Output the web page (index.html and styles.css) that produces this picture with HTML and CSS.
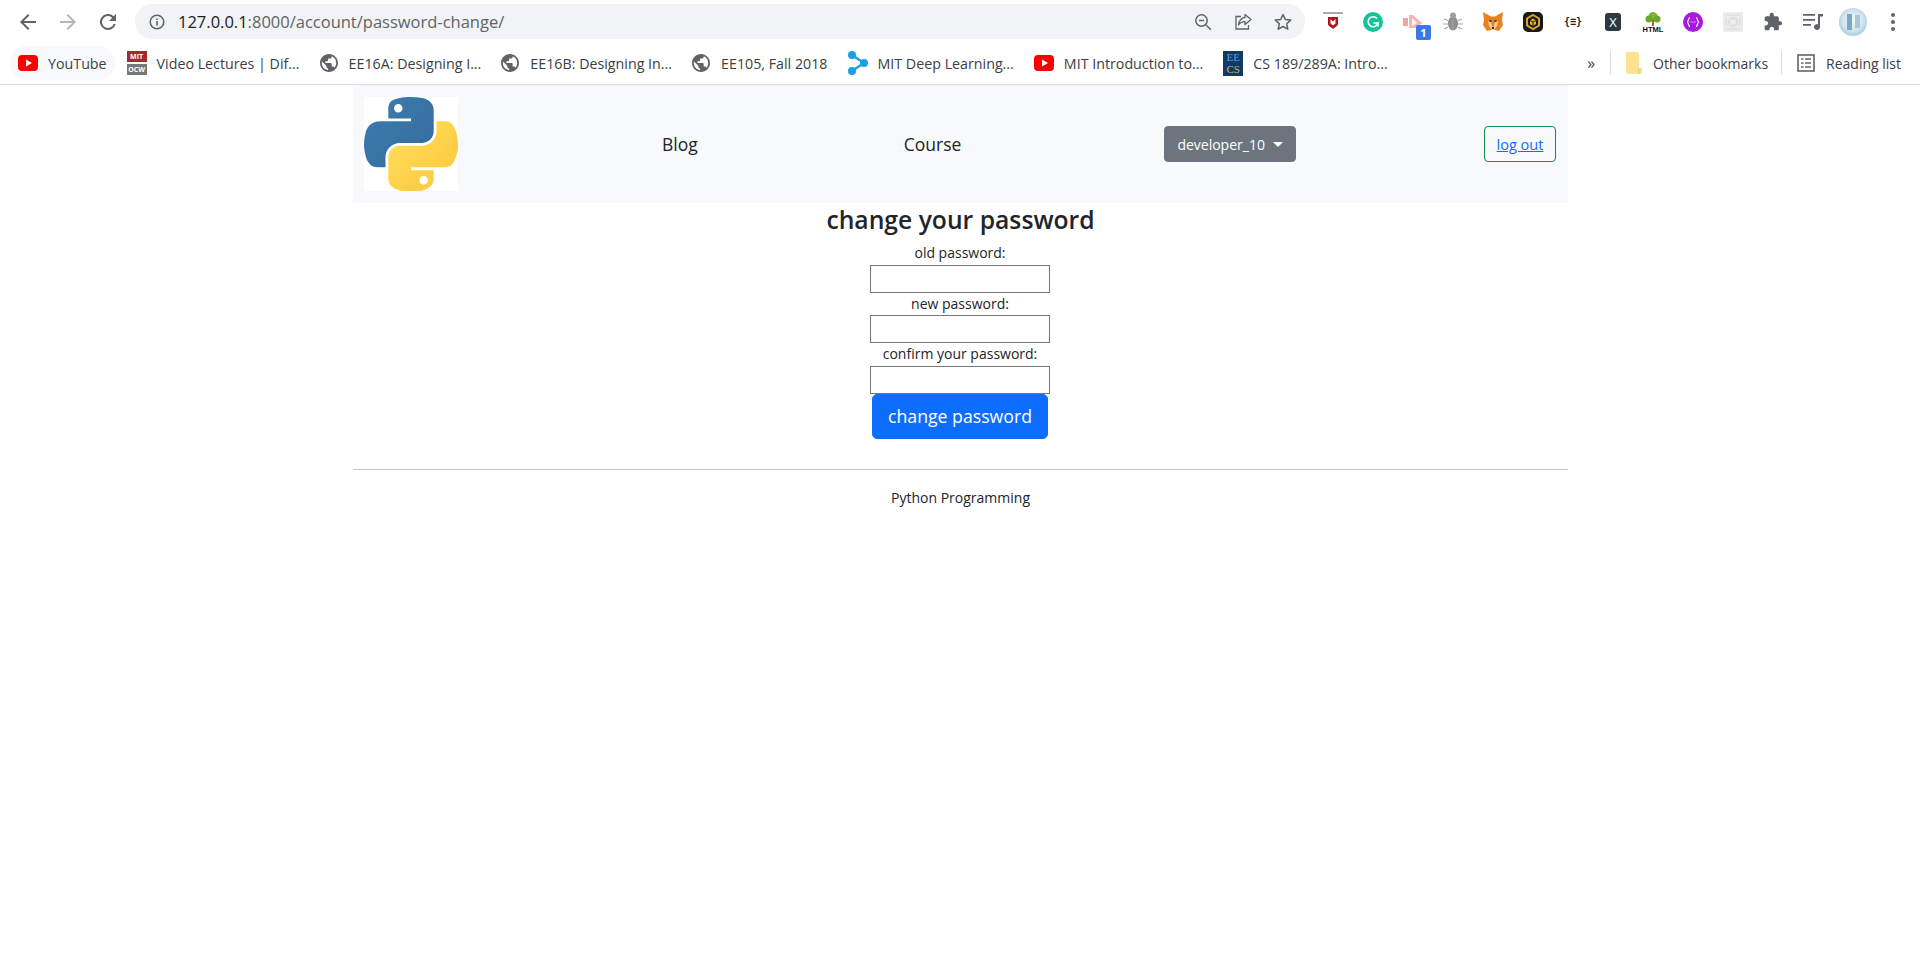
FILE: index.html
```html
<!DOCTYPE html>
<html lang="en">
<head>
  <meta charset="UTF-8" />
  <title>change your password</title>
  <link rel="stylesheet" href="styles.css">
</head>
<body>
  <header class="chrome">
    <div class="toolbar">
      <svg class="nav-icon" viewBox="0 0 24 24"><path d="M20 11H7.8l5.6-5.6L12 4l-8 8 8 8 1.4-1.4L7.8 13H20z" fill="#5f6368"/></svg>
      <svg class="nav-icon" viewBox="0 0 24 24"><path d="M4 11h12.2l-5.6-5.6L12 4l8 8-8 8-1.4-1.4 5.6-5.6H4z" fill="#b4b6b9"/></svg>
      <svg class="nav-icon" viewBox="0 0 24 24"><path d="M17.65 6.35A8 8 0 1 0 19.73 14h-2.08a6 6 0 1 1-1.41-6.24L13 11h7V4z" fill="#5f6368"/></svg>
      <div class="omnibox">
        <svg class="info" viewBox="0 0 16 16"><circle cx="8" cy="8" r="6.8" fill="none" stroke="#5f6368" stroke-width="1.5"/><path d="M7.2 7h1.6v4.6H7.2zM7.2 4.4h1.6V6H7.2z" fill="#5f6368"/></svg>
        <span class="url"><b>127.0.0.1</b>:8000/account/password-change/</span>
        <svg class="omni-icon" viewBox="0 0 20 20"><circle cx="8.5" cy="8.5" r="5.7" fill="none" stroke="#5f6368" stroke-width="1.5"/><path d="M12.8 12.8l5 5M6 8.5h5" stroke="#5f6368" stroke-width="1.5" fill="none"/></svg>
        <svg class="omni-icon" viewBox="0 0 20 20"><path d="M8 4.5H3V17h12.5v-4" fill="none" stroke="#5f6368" stroke-width="1.3"/><path d="M12 2.5l6 5-6 5V9.7c-3 0-5 1-6.5 3.3C6 9 8 6 12 5.4z" fill="none" stroke="#5f6368" stroke-width="1.3" stroke-linejoin="round"/></svg>
        <svg class="omni-icon" viewBox="0 0 20 20"><path d="M10 2.5l2.300 5 5.400.6-4 3.700 1.100 5.400-4.800-2.700-4.800 2.700 1.100-5.400-4-3.700 5.400-.6z" fill="none" stroke="#5f6368" stroke-width="1.5" stroke-linejoin="round"/></svg>
      </div>
      <div class="extensions">
        <svg class="ext" viewBox="0 0 20 20"><rect width="20" height="2" fill="#a9a9a9"/><path d="M5 5h10v7c0 2-3 3-5 5-2-2-5-3-5-5z" fill="#b5121b"/><path d="M7.5 7v4.500l2.500 2 2.500-2V7L10 9.500z" fill="#fff"/></svg>
        <svg class="ext" viewBox="0 0 20 20"><circle cx="10" cy="10" r="10" fill="#15c39a"/><path d="M14 6.500a5 5 0 1 0 1 4.500h-4.500" fill="none" stroke="#fff" stroke-width="1.6"/><path d="M15 11v3.500" stroke="#fff" stroke-width="1.6"/></svg>
        <div class="ext ext-badge">
          <svg viewBox="0 0 20 20"><path d="M0 6h5v8H0z" fill="#f7a1a1"/><path d="M6 3h4l9 8-5 5H6z" fill="#f9b3b3"/><path d="M9 6l5 5-5 3z" fill="#fff"/></svg>
          <span class="badge">1</span>
        </div>
        <svg class="ext" viewBox="0 0 20 20"><ellipse cx="10" cy="11.5" rx="5" ry="7" fill="#8e8e8e"/><circle cx="10" cy="3.5" r="3" fill="#9d9d9d"/><path d="M10 7v11M1 7l4 1.500M19 7l-4 1.500M0 12h5M20 12h-5M1 17l4-2M19 17l-4-2" stroke="#a5a5a5" stroke-width="1.2"/></svg>
        <svg class="ext" viewBox="0 0 20 20"><path d="M0 0l8 4.500h4L20 0l-1 8 1 5-4 6-4-1H8l-4 1-4-6 1-5z" fill="#e8821e"/><path d="M5 9l3 1 2 7 2-7 3-1-1 5-3 4H9l-3-4z" fill="#f6c9a0"/><path d="M9 15h2v2H9z" fill="#333"/><path d="M6.500 8h2v2h-2zM11.500 8h2v2h-2z" fill="#5c3a1e"/></svg>
        <div class="ext ext-dark"><svg viewBox="0 0 20 20"><path d="M10 3l6 3.500v7L10 17l-6-3.500v-7z" fill="none" stroke="#d9a520" stroke-width="2"/><path d="M10 6.500l3 2V12l-3 2-3-2V8.500z" fill="#e8b923"/><path d="M10 10v4M7 8.500l3 1.500 3-1.500" stroke="#17181a" stroke-width="1" fill="none"/></svg></div>
        <span class="ext ext-braces">{≡}</span>
        <span class="ext ext-x">X</span>
        <div class="ext ext-tree"><svg viewBox="0 0 20 14"><circle cx="10" cy="4.5" r="4.5" fill="#7ab833"/><circle cx="6" cy="7" r="3.5" fill="#6aa82b"/><circle cx="14" cy="7" r="3.5" fill="#6aa82b"/><rect x="9" y="8" width="2" height="6" fill="#a9662c"/></svg><span>HTML</span></div>
        <svg class="ext" viewBox="0 0 20 20"><circle cx="10" cy="10" r="10" fill="#a818e0"/><path d="M7 5.500c-2 0-1 4.500-3 4.500 2 0 1 4.500 3 4.500M13 5.500c2 0 1 4.500 3 4.500-2 0-1 4.500-3 4.500" fill="none" stroke="#fff" stroke-width="1.2"/><path d="M7.500 10h1M9.500 10h1M11.500 10h1" stroke="#fff" stroke-width="1.2"/></svg>
        <svg class="ext" viewBox="0 0 20 20"><rect width="20" height="20" rx="1" fill="#ececec"/><circle cx="10" cy="10" r="4" fill="none" stroke="#dedede" stroke-width="2"/><path d="M3 3h14M3 17h14M3 6v8M17 6v8" stroke="#dedede" stroke-width="1.5"/></svg>
        <svg class="ext" viewBox="0 0 24 24"><path d="M20.5 11H19V7c0-1.100-.9-2-2-2h-4V3.500C13 2.120 11.880 1 10.500 1S8 2.120 8 3.500V5H4c-1.100 0-1.990.9-1.990 2v3.800H3.500c1.490 0 2.700 1.210 2.700 2.700s-1.210 2.700-2.700 2.700H2V20c0 1.100.9 2 2 2h3.800v-1.500c0-1.490 1.210-2.700 2.700-2.700 1.490 0 2.700 1.210 2.700 2.700V22H17c1.100 0 2-.9 2-2v-4h1.500c1.380 0 2.500-1.120 2.500-2.500S21.880 11 20.500 11z" fill="#5f6368"/></svg>
        <svg class="ext" viewBox="0 0 20 20"><path d="M0 2h12v1.700H0zM0 7h12v1.700H0zM0 12h8v1.700H0z" fill="#5f6368"/><path d="M15 2h5v2.500h-3V15a3 3 0 1 1-2-2.800z" fill="#5f6368"/></svg>
        <div class="avatar"><span></span><span></span></div>
        <svg class="ext dots" viewBox="0 0 6 20"><circle cx="3" cy="3" r="2" fill="#5f6368"/><circle cx="3" cy="10" r="2" fill="#5f6368"/><circle cx="3" cy="17" r="2" fill="#5f6368"/></svg>
      </div>
    </div>
    <div class="bookmarks">
      <a class="mark mark-hover"><svg class="fav" viewBox="0 0 20 16"><rect width="20" height="16" rx="4" fill="#f00"/><path d="M8 4.500v7l6-3.500z" fill="#fff"/></svg>YouTube</a>
      <a class="mark"><span class="fav ocw"><i>MIT</i><i>OCW</i></span>Video Lectures | Dif...</a>
      <a class="mark"><svg class="fav globe" viewBox="2 2 20 20"><path d="M12 2C6.480 2 2 6.480 2 12s4.480 10 10 10 10-4.480 10-10S17.520 2 12 2zm-1 17.930c-3.950-.49-7-3.850-7-7.930 0-.62.08-1.210.21-1.790L9 15v1c0 1.100.9 2 2 2v1.930zm6.900-2.540c-.26-.81-1-1.390-1.900-1.390h-1v-3c0-.55-.45-1-1-1H8v-2h2c.55 0 1-.45 1-1V7h2c1.100 0 2-.9 2-2v-.41c2.930 1.190 5 4.060 5 7.410 0 2.080-.8 3.970-2.100 5.390z" fill="#5f6368"/></svg>EE16A: Designing I...</a>
      <a class="mark"><svg class="fav globe" viewBox="2 2 20 20"><path d="M12 2C6.480 2 2 6.480 2 12s4.480 10 10 10 10-4.480 10-10S17.520 2 12 2zm-1 17.930c-3.950-.49-7-3.850-7-7.930 0-.62.08-1.210.21-1.790L9 15v1c0 1.100.9 2 2 2v1.930zm6.900-2.540c-.26-.81-1-1.390-1.900-1.390h-1v-3c0-.55-.45-1-1-1H8v-2h2c.55 0 1-.45 1-1V7h2c1.100 0 2-.9 2-2v-.41c2.930 1.190 5 4.060 5 7.410 0 2.080-.8 3.970-2.100 5.390z" fill="#5f6368"/></svg>EE16B: Designing In...</a>
      <a class="mark"><svg class="fav globe" viewBox="2 2 20 20"><path d="M12 2C6.480 2 2 6.480 2 12s4.480 10 10 10 10-4.480 10-10S17.520 2 12 2zm-1 17.930c-3.950-.49-7-3.850-7-7.930 0-.62.08-1.210.21-1.790L9 15v1c0 1.100.9 2 2 2v1.930zm6.900-2.540c-.26-.81-1-1.390-1.900-1.390h-1v-3c0-.55-.45-1-1-1H8v-2h2c.55 0 1-.45 1-1V7h2c1.100 0 2-.9 2-2v-.41c2.930 1.190 5 4.060 5 7.410 0 2.080-.8 3.970-2.100 5.390z" fill="#5f6368"/></svg>EE105, Fall 2018</a>
      <a class="mark"><svg class="fav fav-tall" viewBox="0 0 20 24"><path d="M4 4l12 8-12 8" fill="none" stroke="#1c9fe6" stroke-width="2.5"/><circle cx="4" cy="4" r="4" fill="#1c9fe6"/><circle cx="16" cy="12" r="4" fill="#1c9fe6"/><circle cx="4" cy="20" r="4" fill="#1c9fe6"/></svg>MIT Deep Learning...</a>
      <a class="mark"><svg class="fav" viewBox="0 0 20 16"><rect width="20" height="16" rx="4" fill="#f00"/><path d="M8 4.500v7l6-3.500z" fill="#fff"/></svg>MIT Introduction to...</a>
      <a class="mark"><span class="fav eecs"><i>EE</i><i>CS</i></span>CS 189/289A: Intro...</a>
      <span class="more">»</span>
      <span class="sep"></span>
      <a class="mark mark-folder"><svg class="fav folder" viewBox="0 0 16 22"><path d="M2 0h9a2 2 0 0 1 2 2v15h3v3a2 2 0 0 1-2 2H2a2 2 0 0 1-2-2V2a2 2 0 0 1 2-2z" fill="#fde293"/><path d="M13 17v5M13 17h3" stroke="#e8c860" stroke-width="1" fill="none"/></svg>Other bookmarks</a>
      <span class="sep"></span>
      <a class="mark mark-reading"><svg class="fav" viewBox="0 0 18 18"><rect x="1" y="1" width="16" height="16" fill="none" stroke="#5f6368" stroke-width="1.6"/><path d="M4 5h2.500M8 5h6M4 9h2.500M8 9h6M4 13h2.500M8 13h6" stroke="#5f6368" stroke-width="1.5"/></svg>Reading list</a>
    </div>
  </header>

  <div class="container">
    <nav class="site-nav">
      <svg class="logo" viewBox="0 0 111 111">
        <defs>
          <linearGradient id="py-blue" x1="0" y1="0" x2="1" y2="1"><stop offset="0" stop-color="#3c7eb2"/><stop offset="1" stop-color="#356a99"/></linearGradient>
          <linearGradient id="py-yellow" x1="0" y1="0" x2="1" y2="1"><stop offset="0" stop-color="#ffe05c"/><stop offset="1" stop-color="#fdc63a"/></linearGradient>
        </defs>
        <rect width="111" height="111" fill="#fff"/>
        <path d="M54.919.001c-4.584.022-8.961.413-12.813 1.095C30.760 3.099 28.700 7.295 28.700 15.032v10.219h26.813v3.406H18.638c-7.793 0-14.616 4.684-16.750 13.594-2.462 10.213-2.571 16.586 0 27.250 1.906 7.938 6.457 13.594 14.250 13.594h9.219V70.844c0-8.850 7.657-16.656 16.750-16.656h26.781c7.455 0 13.406-6.138 13.406-13.625V15.032c0-7.266-6.130-12.725-13.406-13.937C64.282.328 59.502-.020 54.919.001zM40.419 8.220c2.770 0 5.031 2.299 5.031 5.125 0 2.816-2.262 5.094-5.031 5.094-2.779 0-5.031-2.277-5.031-5.094 0-2.826 2.252-5.125 5.031-5.125z" fill="url(#py-blue)"/>
        <path d="M85.638 28.657v11.906c0 9.231-7.826 17-16.750 17H42.106c-7.336 0-13.406 6.278-13.406 13.625v25.531c0 7.266 6.319 11.540 13.406 13.625 8.487 2.496 16.626 2.947 26.781 0 6.750-1.954 13.406-5.888 13.406-13.625V86.500H55.513v-3.406H95.700c7.793 0 10.696-5.436 13.406-13.594 2.799-8.399 2.680-16.476 0-27.250-1.926-7.757-5.604-13.594-13.406-13.594zM70.575 93.313c2.779 0 5.031 2.277 5.031 5.094 0 2.826-2.252 5.125-5.031 5.125-2.770 0-5.031-2.299-5.031-5.125 0-2.816 2.262-5.094 5.031-5.094z" fill="url(#py-yellow)"/>
      </svg>
      <a class="nav-link">Blog</a>
      <a class="nav-link">Course</a>
      <button class="btn-user">developer_10<span class="caret"></span></button>
      <div class="logout"><a href="#">log out</a></div>
    </nav>

    <main class="content">
      <h3>change your password</h3>
      <form class="pw-form">
        <label>old password:</label>
        <input type="password" />
        <label>new password:</label>
        <input type="password" />
        <label>confirm your password:</label>
        <input type="password" />
        <button type="button" class="btn-submit">change password</button>
      </form>
    </main>

    <footer class="site-footer">
      <p>Python Programming</p>
    </footer>
  </div>
</body>
</html>
```

FILE: styles.css
```css
* {
  box-sizing: border-box;
}
body {
  margin: 0;
  font-family: "Open Sans", "Noto Sans", sans-serif;
  color: #212529;
  background: #fff;
}

/* browser chrome */
.chrome {
  height: 85px;
  border-bottom: 1px solid #dadce0;
}
.toolbar {
  display: flex;
  align-items: center;
  height: 42px;
  padding: 1px 0 0 16px;
}
.nav-icon {
  width: 24px;
  height: 24px;
  margin-right: 16px;
}
.omnibox {
  display: flex;
  align-items: center;
  width: 1170px;
  height: 35px;
  margin-left: -1px;
  padding: 0 12px 0 14px;
  background: #f1f3f4;
  border-radius: 18px;
}
.info {
  width: 16px;
  height: 16px;
  margin-right: 13px;
}
.url {
  flex: 1;
  font-size: 16.5px;
  color: #5f6368;
}
.url b {
  font-weight: 400;
  color: #202124;
}
.omni-icon {
  width: 20px;
  height: 20px;
  margin-left: 20px;
}
.extensions {
  display: flex;
  align-items: center;
  margin-left: 18px;
  gap: 20px;
}
.ext {
  width: 20px;
  height: 20px;
  flex: none;
}
.ext-badge {
  position: relative;
}
.ext-badge svg {
  display: block;
}
.badge {
  position: absolute;
  right: -8px;
  bottom: -8px;
  width: 15px;
  height: 15px;
  background: #3b78e7;
  border-radius: 2px;
  color: #fff;
  font-size: 11px;
  font-weight: 700;
  line-height: 15px;
  text-align: center;
}
.ext-dark {
  background: #17181a;
  border-radius: 5px;
}
.ext-dark svg {
  display: block;
}
.ext-braces {
  font-family: "DejaVu Sans Mono", monospace;
  font-size: 10px;
  font-weight: 700;
  line-height: 20px;
  text-align: center;
  white-space: nowrap;
}
.ext-x {
  width: 16px;
  height: 18px;
  margin: 0 2px;
  background: #2b3a42;
  border-radius: 3px;
  color: #fff;
  font-size: 13px;
  line-height: 18px;
  text-align: center;
}
.ext-tree {
  display: flex;
  flex-direction: column;
  align-items: center;
}
.ext-tree svg {
  width: 20px;
  height: 14px;
  flex: none;
}
.ext-tree span {
  font-family: "Liberation Sans", sans-serif;
  font-size: 7.5px;
  font-weight: 700;
  line-height: 7px;
  color: #111;
}
.avatar {
  width: 28px;
  height: 28px;
  margin-left: -4px;
  border-radius: 50%;
  background: radial-gradient(circle at 50% 45%, #f2f7f9 0, #cfe4ee 50%, #7fb3cc 100%);
  display: flex;
  align-items: center;
  justify-content: center;
  gap: 3px;
  flex: none;
}
.avatar span {
  width: 5px;
  height: 16px;
  background: #79a9c4;
}
.avatar span + span {
  height: 13px;
  background: #a8c8da;
}
.dots {
  width: 6px;
  margin-left: 3px;
}

.bookmarks {
  display: flex;
  align-items: center;
  height: 42px;
  padding-left: 10px;
  font-size: 14.25px;
  color: #3c4043;
}
.mark {
  display: flex;
  align-items: center;
  height: 34px;
  padding: 0 8px;
  margin-right: 4px;
  white-space: nowrap;
  border-radius: 17px;
}
.mark-hover {
  background: #f8f9fa;
}
.fav {
  width: 20px;
  height: 16px;
  margin-right: 10px;
  flex: none;
}
.fav-tall {
  height: 24px;
}
.globe {
  width: 18px;
  height: 18px;
  margin-right: 11px;
}
.folder {
  width: 16px;
  height: 22px;
  margin-right: 11px;
}
.ocw {
  display: flex;
  flex-direction: column;
  height: 24px;
  font-size: 7px;
  font-weight: 700;
  line-height: 11px;
  text-align: center;
}
.ocw i {
  font-style: normal;
  background: #a8282c;
  color: #fff;
}
.ocw i + i {
  background: #777;
  margin-top: 2px;
}
.eecs {
  display: flex;
  flex-direction: column;
  height: 25px;
  background: #0f3a66;
  font-family: "Liberation Serif", serif;
  font-size: 11px;
  line-height: 12px;
  text-align: center;
  color: #5f9ad8;
}
.eecs i {
  font-style: normal;
}
.eecs i + i {
  color: #d0b060;
}
.more {
  margin-left: auto;
  font-size: 16px;
  margin-right: 15px;
}
.sep {
  width: 1px;
  height: 24px;
  background: #dadce0;
  margin-right: 7px;
}
.mark-folder {
  margin-right: 5px;
  font-size: 14px;
}
.mark-reading {
  margin-right: 11px;
  font-size: 14px;
}
.mark-reading .fav {
  width: 18px;
  height: 18px;
  margin-right: 11px;
}

/* page */
.container {
  width: 1215px;
  margin-left: 353px;
}
.site-nav {
  display: flex;
  align-items: center;
  height: 118px;
  padding: 0 12px 0 11px;
  background: #f8f9fa;
}
.logo {
  display: block;
  flex: none;
  width: 94px;
  height: 94px;
}
.nav-link {
  margin-left: 204px;
  font-size: 17.5px;
  color: #212529;
}
.nav-link + .nav-link {
  margin-left: 206px;
}
.btn-user {
  display: flex;
  align-items: center;
  height: 36px;
  margin-left: 203px;
  padding: 0 12px;
  background: #6c757d;
  border: 1px solid #6c757d;
  border-radius: 4px;
  color: #fff;
  font: inherit;
  font-size: 14px;
}
.caret {
  width: 0;
  height: 0;
  margin-left: 8px;
  border-top: 5px solid #fff;
  border-left: 5px solid transparent;
  border-right: 5px solid transparent;
}
.logout {
  margin-left: auto;
  display: flex;
  align-items: center;
  justify-content: center;
  flex: none;
  width: 72px;
  height: 36px;
  border: 1px solid #198754;
  border-radius: 4px;
  font-size: 14.5px;
}
.logout a {
  color: #0d6efd;
}

.content {
  text-align: center;
}
.content h3 {
  height: 38.3px;
  margin: 1px 0 0;
  font-size: 24.7px;
  font-weight: 600;
  line-height: 32px;
}
.pw-form {
  display: flex;
  flex-direction: column;
  align-items: center;
  padding-right: 1px;
  font-size: 14px;
}
.pw-form label {
  height: 22.5px;
  line-height: 22px;
}
.pw-form input {
  width: 180px;
  height: 28px;
  border: 1px solid #767676;
  padding: 1px 2px;
  background: #fff;
}
.btn-submit {
  width: 176px;
  height: 45px;
  background: #0d6efd;
  border: 1px solid #0d6efd;
  border-radius: 5px;
  color: #fff;
  font: inherit;
  font-size: 17.7px;
}
.site-footer {
  margin-top: 30px;
  border-top: 1px solid #c6c6c6;
  text-align: center;
  font-size: 14px;
}
.site-footer p {
  margin: 18px 0 0;
}
```
